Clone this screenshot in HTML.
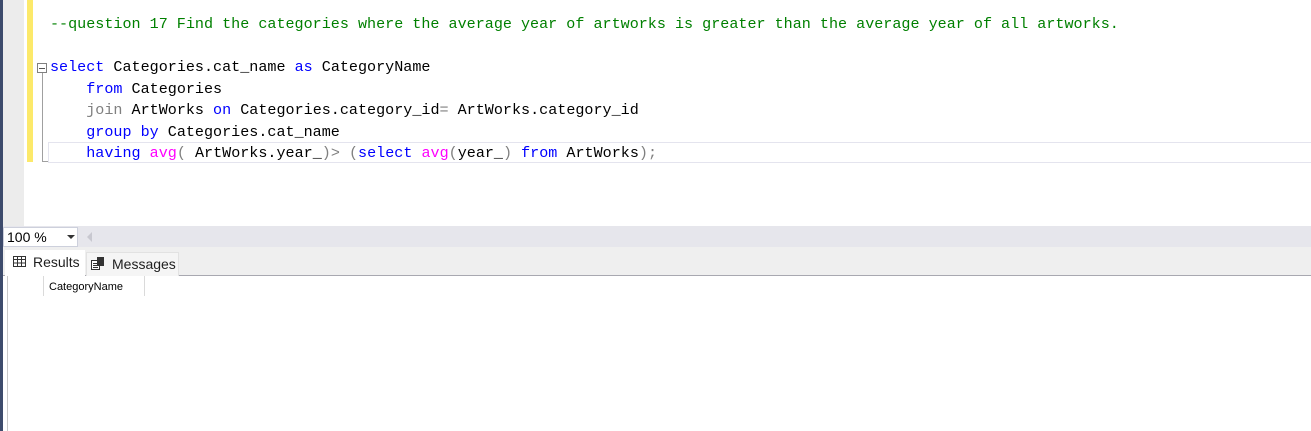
<html><head><style>
body{margin:0;width:1311px;height:431px;overflow:hidden;background:#fff;position:relative;font-family:"Liberation Sans",sans-serif}
div{position:absolute}
.code{font-family:"Liberation Mono",monospace;font-size:15.1px;white-space:pre;line-height:21.5px;color:#000}
.k{color:#0000ff}.c{color:#008000}.g{color:#808080}.m{color:#ff00ff}
</style></head><body>
<div style="left:0;top:0;width:3px;height:431px;background:#3d4b6c"></div>
<div style="left:3px;top:0;width:21px;height:226px;background:#ececec"></div>
<div style="left:27px;top:0;width:6px;height:162px;background:#fce96a"></div>
<div style="left:42px;top:72px;width:1px;height:90px;background:#a0a0a0"></div>
<div style="left:42px;top:161px;width:6px;height:1px;background:#a0a0a0"></div>
<div style="left:37px;top:63px;width:8px;height:8px;border:1px solid #808080;background:#fff"></div>
<div style="left:39px;top:68px;width:6px;height:1px;background:#555"></div>
<div style="left:48px;top:142px;width:1263px;height:19px;border:1px solid #e4e4ee;border-right:none"></div>
<div class="code" style="left:50px;top:14px"><span class="c">--question 17 Find the categories where the average year of artworks is greater than the average year of all artworks.</span>

<span class="k">select</span> Categories.cat_name <span class="k">as</span> CategoryName
    <span class="k">from</span> Categories
    <span class="g">join</span> ArtWorks <span class="k">on</span> Categories.category_id<span class="g">=</span> ArtWorks.category_id
    <span class="k">group by</span> Categories.cat_name
    <span class="k">having</span> <span class="m">avg</span><span class="g">(</span> ArtWorks.year_<span class="g">)&gt;</span> <span class="g">(</span><span class="k">select</span> <span class="m">avg</span><span class="g">(</span>year_<span class="g">)</span> <span class="k">from</span> ArtWorks<span class="g">);</span></div>
<div style="left:3px;top:226px;width:1308px;height:21px;background:#e6e6ec"></div>
<div style="left:3px;top:227px;width:73px;height:18px;background:#fff;border:1px solid #cdd0dc;font-size:14px;line-height:18px;text-indent:3px">100 %</div>
<div style="left:67px;top:235px;width:0;height:0;border-left:4px solid transparent;border-right:4px solid transparent;border-top:4px solid #333"></div>
<div style="left:87px;top:232px;width:0;height:0;border-top:5px solid transparent;border-bottom:5px solid transparent;border-right:5px solid #c8c8d0"></div>
<div style="left:3px;top:247px;width:1308px;height:28px;background:#efefef"></div>
<div style="left:3px;top:275px;width:1308px;height:1px;background:#a8a8b0"></div>
<div style="left:5px;top:250px;width:80px;height:26px;background:#fff"></div>
<svg style="position:absolute;left:13px;top:256px" width="13" height="11"><rect x="0.5" y="0.5" width="12" height="10" fill="none" stroke="#333"/><path d="M0 3.5H13M0 7H13M4.5 0V11M8.5 0V11" stroke="#333"/></svg>
<div style="left:33px;top:254px;font-size:14px;color:#1e1e1e">Results</div>
<div style="left:86px;top:252px;width:91px;height:23px;background:#f5f5f5;border:1px solid #e2e2e2;border-bottom:none"></div>
<svg style="position:absolute;left:91px;top:257px" width="14" height="13"><rect x="0.5" y="3.5" width="8" height="9" fill="#fff" stroke="#333"/><path d="M2 6.5H7M2 8.5H7M2 10.5H7" stroke="#333"/><rect x="6" y="0" width="7" height="9" fill="#333"/></svg>
<div style="left:112px;top:256px;font-size:14px;color:#1e1e1e">Messages</div>
<div style="left:7px;top:276px;width:1px;height:155px;background:#c8c8c8"></div>
<div style="left:43px;top:276px;width:1px;height:20px;background:#dadada"></div>
<div style="left:144px;top:276px;width:1px;height:20px;background:#dadada"></div>
<div style="left:49px;top:281px;font-size:11px;color:#000">CategoryName</div>
</body></html>
